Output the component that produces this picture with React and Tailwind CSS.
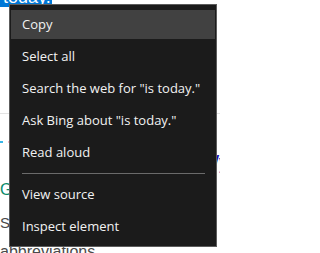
const MENU_ITEMS = [
  { label: 'Copy', active: true },
  { label: 'Select all' },
  { label: 'Search the web for "is today."' },
  { label: 'Ask Bing about "is today."' },
  { label: 'Read aloud' },
  { divider: true },
  { label: 'View source' },
  { label: 'Inspect element' },
];

export default function App() {
  return (
    <div className="relative h-[253px] w-[220px] overflow-hidden bg-white font-['Liberation_Sans',Arial,sans-serif]">
      <PageBehind />
      <ContextMenu />
    </div>
  );
}

function PageBehind() {
  return (
    <div className="flex flex-col">
      <div className="-mt-[14px] h-[23px] text-[18px] leading-[23px] text-[#444]">
        <span className="bg-[#0078d7] pl-[3px] pr-[1px] text-white">today.</span>
      </div>
      <div className="h-[104px]" />
      <div className="h-px w-full bg-[#e3e3e3]" />
      <div className="h-[25px]" />
      <div className="flex h-[6px] items-center gap-[5px]">
        <span className="h-[2px] w-[3px] bg-[#38b6e8]" />
        <span className="h-[2px] w-[2px] rounded-full bg-[#f3a6b6]" />
      </div>
      <div className="flex h-[33px] items-center whitespace-nowrap text-[20px] text-[#1a0dab]">
        <span className="ml-auto mr-[-9px]">Wy</span>
      </div>
      <div className="h-[22px] whitespace-nowrap pt-[4px] text-[16px] leading-[16px] text-[#0a8a6a]">Go</div>
      <div className="flex h-[30px] items-start justify-between whitespace-nowrap pt-[15px] text-[15px] leading-[16px] text-[#4a4a4a]">
        <span>So</span>
        <span className="mr-[-5px] mt-[9px] text-[#6a8aa8]">r</span>
      </div>
      <div className="whitespace-nowrap pt-[14px] text-[16px] leading-[16px] text-[#4a4a4a]">abbreviations</div>
    </div>
  );
}

function ContextMenu() {
  return (
    <div className="absolute left-[9px] top-[4px] w-[208px] border border-[#5c5c5c] bg-[#1b1b1b] px-[1px] pb-[4px] pt-[3px] font-['Open_Sans','Noto_Sans',sans-serif] text-[13px] text-[#f2f2f2]">
      {MENU_ITEMS.map((item, i) =>
        item.divider ? (
          <div key={i} className="flex h-[10px] items-center pl-[11px] pr-[10px]">
            <div className="h-px w-full bg-[#6b6b6b]" />
          </div>
        ) : (
          <div key={i} className="flex h-[32px] flex-col pb-[1px] pt-[2px]">
            <div className={['flex flex-1 items-center whitespace-nowrap pl-[11px]', item.active ? 'bg-[#414141]' : ''].join(' ')}>
              {item.label}
            </div>
          </div>
        )
      )}
    </div>
  );
}
